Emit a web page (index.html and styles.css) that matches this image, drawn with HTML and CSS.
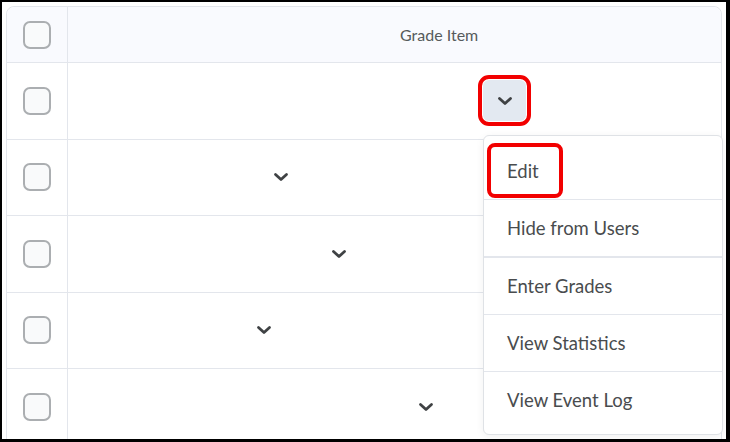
FILE: index.html
```html
<!DOCTYPE html>
<html lang="en">
<head>
  <meta charset="UTF-8">
  <title>Grade Items</title>
  <link rel="stylesheet" href="styles.css">
</head>
<body>

<div class="frame">
  <div class="grid">
    <div class="row head">
      <div class="cell check"><span class="box"></span></div>
      <div class="cell main"><span class="head-title">Grade Item</span></div>
    </div>
    <div class="row">
      <div class="cell check"><span class="box"></span></div>
      <div class="cell main">
        <button class="chev pos-1 active" aria-label="Actions">
          <svg viewBox="0 0 16 10" width="16" height="10"><path d="M2.5 2.5 L8 7.5 L13.5 2.5"/></svg>
        </button>
      </div>
    </div>
    <div class="row">
      <div class="cell check"><span class="box"></span></div>
      <div class="cell main">
        <button class="chev pos-2" aria-label="Actions">
          <svg viewBox="0 0 16 10" width="16" height="10"><path d="M2.5 2.5 L8 7.5 L13.5 2.5"/></svg>
        </button>
      </div>
    </div>
    <div class="row">
      <div class="cell check"><span class="box"></span></div>
      <div class="cell main">
        <button class="chev pos-3" aria-label="Actions">
          <svg viewBox="0 0 16 10" width="16" height="10"><path d="M2.5 2.5 L8 7.5 L13.5 2.5"/></svg>
        </button>
      </div>
    </div>
    <div class="row">
      <div class="cell check"><span class="box"></span></div>
      <div class="cell main">
        <button class="chev pos-4" aria-label="Actions">
          <svg viewBox="0 0 16 10" width="16" height="10"><path d="M2.5 2.5 L8 7.5 L13.5 2.5"/></svg>
        </button>
      </div>
    </div>
    <div class="row">
      <div class="cell check"><span class="box"></span></div>
      <div class="cell main">
        <button class="chev pos-5" aria-label="Actions">
          <svg viewBox="0 0 16 10" width="16" height="10"><path d="M2.5 2.5 L8 7.5 L13.5 2.5"/></svg>
        </button>
      </div>
    </div>
  </div>

  <ul class="menu">
    <li class="menu-item marked">Edit</li>
    <li class="menu-item split">Hide from Users</li>
    <li class="menu-item">Enter Grades</li>
    <li class="menu-item">View Statistics</li>
    <li class="menu-item">View Event Log</li>
  </ul>
</div>

</body>
</html>
```

FILE: styles.css
```css
body {
  margin: 0;
  font-family: Lato, "Open Sans", sans-serif;
  background: #fff;
}
.frame {
  position: relative;
  width: 730px;
  height: 442px;
  box-sizing: border-box;
  border: 2px solid #000;
  border-right-width: 4px;
  border-bottom-width: 3px;
  padding: 4px;
  overflow: hidden;
  background: #fff;
}
.grid {
  border: 1px solid #e3e6ec;
  border-radius: 8px 8px 0 0;
}
.row {
  display: grid;
  grid-template-columns: 60px 1fr;
  height: 75.5px;
  border-bottom: 1px solid #e3e6ec;
}
.row.head {
  height: 55px;
  background: #f9fafe;
  border-radius: 8px 8px 0 0;
}
.cell {
  display: flex;
  align-items: center;
}
.check {
  justify-content: center;
}
.main {
  border-left: 1px solid #e3e6ec;
}
.box {
  width: 24px;
  height: 24px;
  border: 2px solid #abaeb1;
  border-radius: 7px;
  background: #f9fafb;
}
.head-title {
  padding-left: 332px;
  font-size: 16px;
  color: #565a5c;
}
.chev {
  width: 43px;
  height: 41px;
  border: none;
  border-radius: 6px;
  background: transparent;
  display: flex;
  align-items: center;
  justify-content: center;
  padding: 0;
}
.chev svg path {
  fill: none;
  stroke: #3f4244;
  stroke-width: 2.8;
  stroke-linecap: round;
  stroke-linejoin: round;
}
.chev.active {
  background: #e3e9f1;
  outline: 4px solid #f20000;
  outline-offset: 1px;
}
.pos-1 { margin-left: 415px; }
.pos-2 { margin-left: 191px; }
.pos-3 { margin-left: 249px; }
.pos-4 { margin-left: 174px; }
.pos-5 { margin-left: 336px; }

.menu {
  position: absolute;
  left: 481px;
  top: 133px;
  width: 238px;
  margin: 0;
  padding: 7px 0 6px;
  list-style: none;
  background: #fff;
  border: 1px solid #dfe2e6;
  border-radius: 6px;
  box-shadow: 0 2px 8px rgba(0,0,0,0.06);
}
.menu-item {
  position: relative;
  height: 56px;
  display: flex;
  align-items: center;
  padding-left: 23px;
  font-size: 18.5px;
  color: #494c4e;
  border-bottom: 1px solid #e3e6ec;
}
.menu-item:last-child {
  border-bottom: none;
}
.menu-item.split {
  border-bottom-width: 2px;
}
.menu-item.marked::after {
  content: "";
  position: absolute;
  left: 3px;
  top: 0;
  width: 68px;
  height: 47px;
  border: 4px solid #f20000;
  border-radius: 8px;
}
```
